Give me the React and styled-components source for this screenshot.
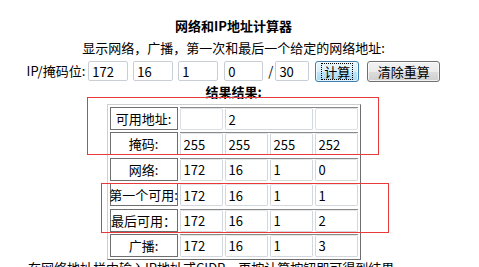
import React from 'react';
import styled, { createGlobalStyle } from 'styled-components';

const GlobalStyle = createGlobalStyle`
  body {
    margin: 0;
    background: #fff;
    color: #000;
    font-family: "Noto Sans CJK SC", "Noto Sans", sans-serif;
    font-size: 13px;
  }
`;

const Page = styled.div`
  position: relative;
  width: 451px;
  margin-left: 8px;
  padding-top: 16px;
  height: 251px;
  overflow: hidden;
`;

const Title = styled.h1`
  margin: 0;
  font-size: 13px;
  font-weight: bold;
  line-height: 20px;
  text-align: center;
`;

const Intro = styled.div`
  margin-top: 3px;
  line-height: 18px;
  text-align: center;
`;

const IpRow = styled.div`
  display: flex;
  justify-content: center;
  align-items: center;
  height: 22px;
  margin-top: 3px;
`;

const RowLabel = styled.span`
  line-height: 20px;
`;

const Slash = styled.span`
  margin-left: 5px;
  line-height: 20px;
`;

const Octet = styled.input`
  box-sizing: border-box;
  width: ${p => p.$w || 40}px;
  height: 20px;
  margin-left: ${p => p.$ml || 0}px;
  padding: 0 3px;
  border: 1px solid #c9ced6;
  border-radius: 2px;
  background: #fff;
  font-family: "Noto Sans CJK SC", "Noto Sans", sans-serif;
  font-size: 13px;
  color: #000;
  outline: none;
`;

const Button = styled.button`
  box-sizing: border-box;
  height: 21px;
  width: ${p => p.$w}px;
  margin-left: ${p => p.$ml}px;
  padding: 0;
  border: 1px solid ${p => (p.$focused ? '#3c7fb1' : '#707070')};
  border-radius: 3px;
  background: ${p =>
    p.$focused
      ? 'linear-gradient(#eaf6fd 0%, #d9f0fc 50%, #bee6fd 51%, #a7d9f5 100%)'
      : 'linear-gradient(#f2f2f2 0%, #ebebeb 50%, #dddddd 51%, #cfcfcf 100%)'};
  box-shadow: inset 0 0 0 1px rgba(255, 255, 255, 0.7);
  font-family: "Noto Sans CJK SC", "Noto Sans", sans-serif;
  font-size: 13px;
  color: #000;
  line-height: 17px;
`;

const FocusRing = styled.span`
  display: inline-block;
  padding: 0 2px;
  outline: 1px dotted #000;
  outline-offset: 0;
  line-height: 15px;
`;

const ResultTitle = styled.div`
  margin-top: 2px;
  font-weight: bold;
  line-height: 16px;
  text-align: center;
`;

const Table = styled.div`
  display: flex;
  flex-direction: column;
  row-gap: 2.4px;
  width: fit-content;
  margin: 4px auto 0;
  padding: 2px;
  border: 1px solid;
  border-color: #cfcfcf #6e6e6e #6e6e6e #cfcfcf;
`;

const Row = styled.div`
  display: flex;
  gap: 2px;
  height: 23px;
`;

const LabelCell = styled.div`
  box-sizing: border-box;
  width: 68px;
  display: flex;
  align-items: center;
  justify-content: center;
  border: 1px solid #6e6e6e;
  white-space: nowrap;
`;

const Values = styled.div`
  display: flex;
  gap: 2px;
  border-top: 1px solid #8a8a8a;
`;

const ValueBox = styled.input`
  box-sizing: border-box;
  width: ${p => p.$w || 43}px;
  height: 22px;
  padding: 0 3px;
  border: 1px solid #d3d7de;
  border-top-color: #e4e6ea;
  border-radius: 2px;
  background: #fff;
  font-family: "Noto Sans CJK SC", "Noto Sans", sans-serif;
  font-size: 13px;
  color: #000;
  outline: none;
`;

const EmptyBox = styled.div`
  box-sizing: border-box;
  width: 43px;
  height: 22px;
  border: 1px solid #dcdfe4;
  border-radius: 2px;
`;

const Note = styled.div`
  padding-left: 20px;
  line-height: 16px;
  white-space: nowrap;
`;

const Highlight = styled.div`
  position: absolute;
  left: ${p => p.$x}px;
  top: ${p => p.$y}px;
  width: ${p => p.$w}px;
  height: ${p => p.$h}px;
  border: 1px solid #e8393b;
  box-sizing: border-box;
  pointer-events: none;
`;

const rows = [
  { label: '掩码:', values: ['255', '255', '255', '252'] },
  { label: '网络:', values: ['172', '16', '1', '0'] },
  { label: '第一个可用:', values: ['172', '16', '1', '1'] },
  { label: '最后可用：', values: ['172', '16', '1', '2'] },
  { label: '广播:', values: ['172', '16', '1', '3'] },
];

export default function App() {
  return (
    <>
      <GlobalStyle />
      <Page>
        <Title>网络和IP地址计算器</Title>
        <Intro>显示网络，广播，第一次和最后一个给定的网络地址:</Intro>
        <IpRow>
          <RowLabel>IP/掩码位:</RowLabel>
          <Octet readOnly value="172" $ml={3} />
          <Octet readOnly value="16" $ml={5} />
          <Octet readOnly value="1" $ml={5} />
          <Octet readOnly value="0" $ml={6} $w={39} />
          <Slash>/</Slash>
          <Octet readOnly value="30" $ml={2} $w={34} />
          <Button $focused $w={44} $ml={6}>
            <FocusRing>计算</FocusRing>
          </Button>
          <Button $w={73} $ml={8}>清除重算</Button>
        </IpRow>
        <ResultTitle>结果结果:</ResultTitle>
        <Table>
          <Row>
            <LabelCell>可用地址:</LabelCell>
            <Values>
              <EmptyBox />
              <ValueBox readOnly value="2" $w={88} />
              <EmptyBox />
            </Values>
          </Row>
          {rows.map(row => (
            <Row key={row.label}>
              <LabelCell>{row.label}</LabelCell>
              <Values>
                {row.values.map((v, i) => (
                  <ValueBox key={i} readOnly value={v} />
                ))}
              </Values>
            </Row>
          ))}
        </Table>
        <Note>在网络地址栏中输入IP地址或CIDR，再按计算按钮即可得到结果。</Note>
      </Page>
      <Highlight $x={87} $y={97} $w={292} $h={58} />
      <Highlight $x={101} $y={183} $w={288} $h={50} />
    </>
  );
}
